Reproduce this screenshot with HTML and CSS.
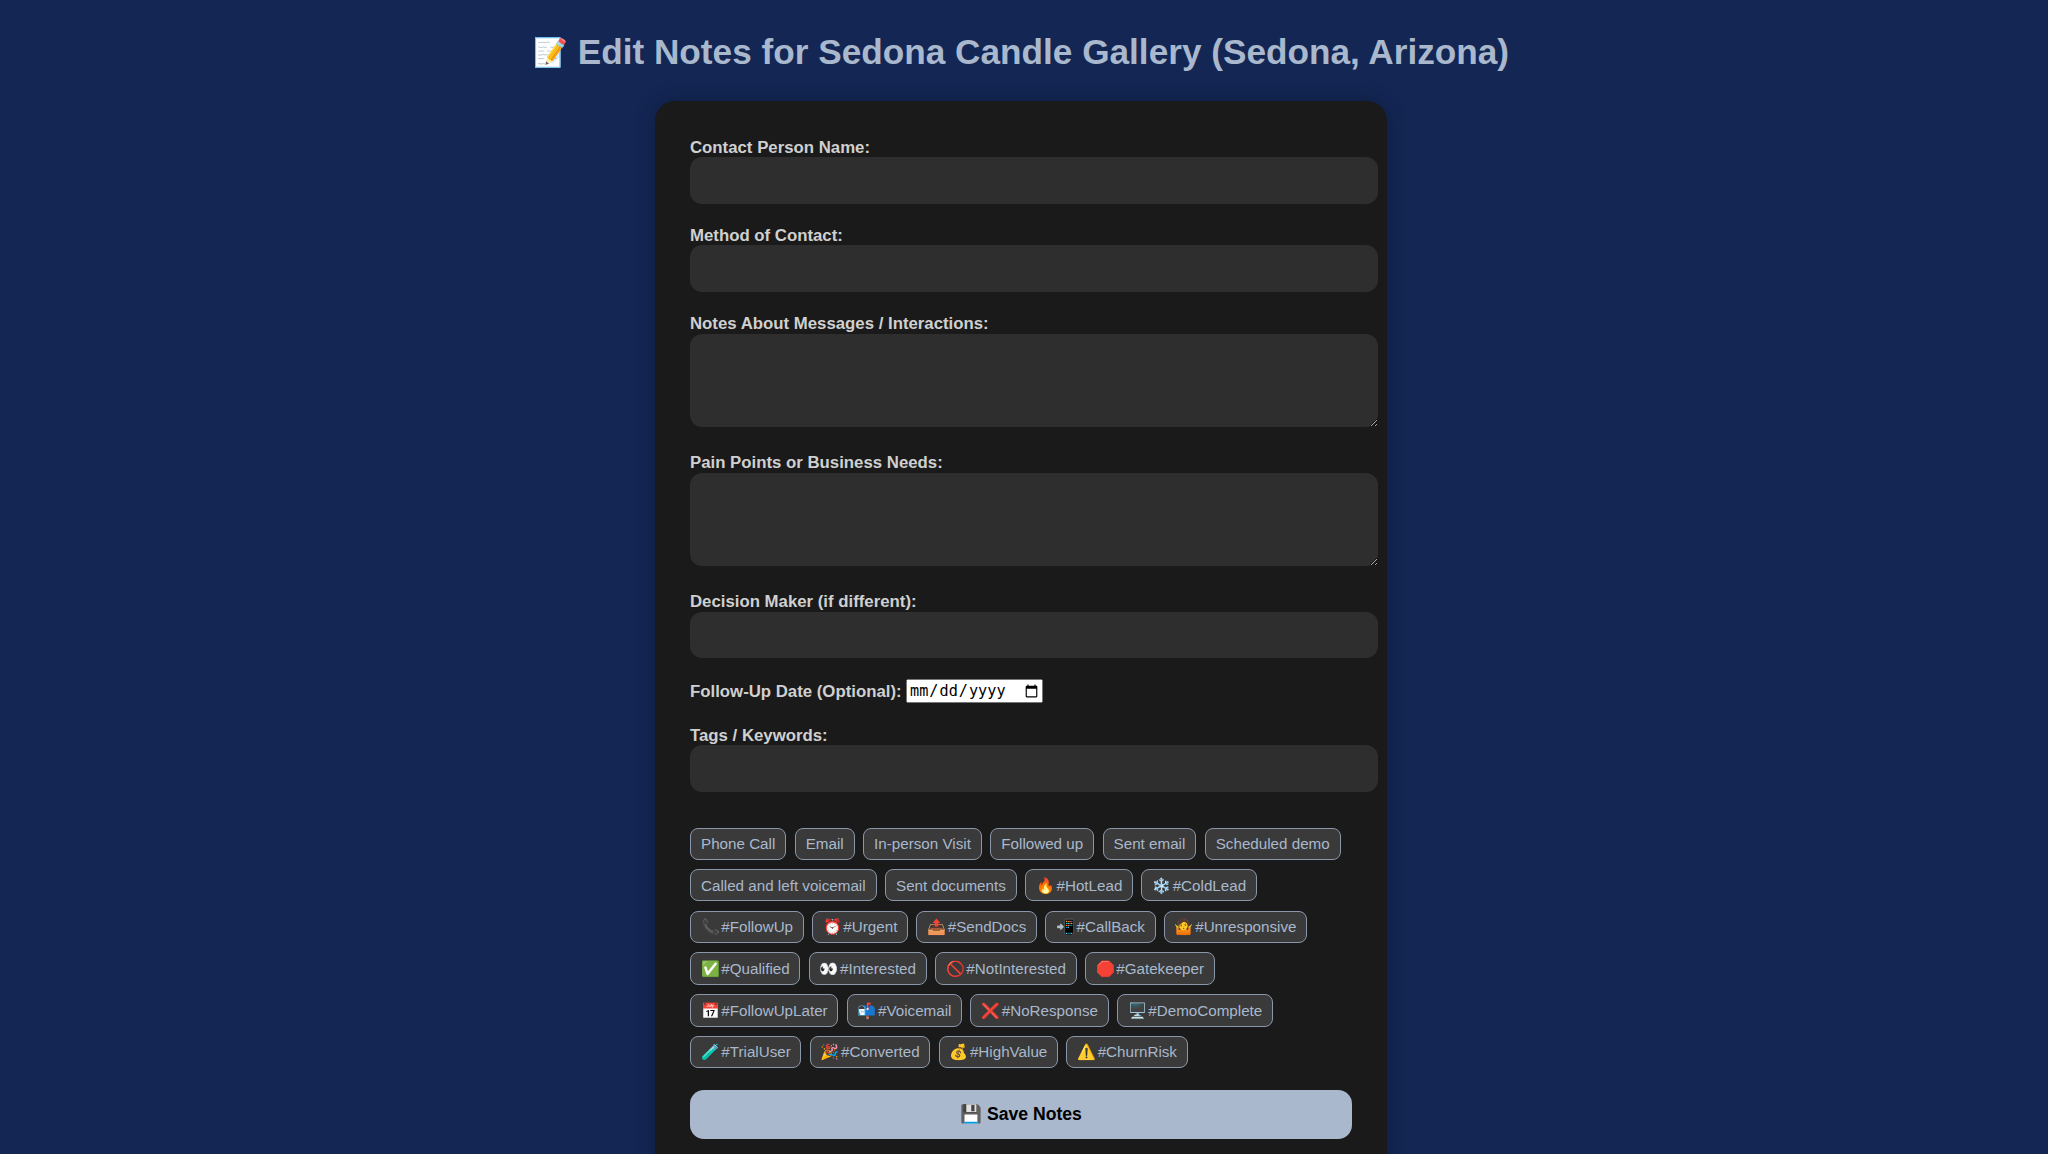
FILE: index.html
```html
<!DOCTYPE html>
<html lang="en">
<head>
<meta charset="utf-8">
<title>Edit Notes</title>
<link rel="stylesheet" href="styles.css">
</head>
<body>
<h1 class="title"><span class="title-emoji">📝</span> Edit Notes for Sedona Candle Gallery (Sedona, Arizona)</h1>
<form class="card">
  <label class="label">Contact Person Name:</label>
  <input class="field" type="text">
  <label class="label">Method of Contact:</label>
  <input class="field" type="text">
  <label class="label">Notes About Messages / Interactions:</label>
  <textarea class="field area"></textarea>
  <label class="label">Pain Points or Business Needs:</label>
  <textarea class="field area"></textarea>
  <label class="label">Decision Maker (if different):</label>
  <input class="field" type="text">
  <div class="date-row"><label class="label inline">Follow-Up Date (Optional):</label> <input class="date" type="date"></div>
  <label class="label">Tags / Keywords:</label>
  <input class="field" type="text">
  <div class="chips">
    <button type="button" class="chip">Phone Call</button>
    <button type="button" class="chip">Email</button>
    <button type="button" class="chip">In-person Visit</button>
    <button type="button" class="chip">Followed up</button>
    <button type="button" class="chip">Sent email</button>
    <button type="button" class="chip">Scheduled demo</button>
    <button type="button" class="chip">Called and left voicemail</button>
    <button type="button" class="chip">Sent documents</button>
    <button type="button" class="chip tag">🔥 #HotLead</button>
    <button type="button" class="chip tag">❄️ #ColdLead</button>
    <button type="button" class="chip tag">📞 #FollowUp</button>
    <button type="button" class="chip tag">⏰ #Urgent</button>
    <button type="button" class="chip tag">📤 #SendDocs</button>
    <button type="button" class="chip tag">📲 #CallBack</button>
    <button type="button" class="chip tag">🤷 #Unresponsive</button>
    <button type="button" class="chip tag">✅ #Qualified</button>
    <button type="button" class="chip tag">👀 #Interested</button>
    <button type="button" class="chip tag">🚫 #NotInterested</button>
    <button type="button" class="chip tag">🛑 #Gatekeeper</button>
    <button type="button" class="chip tag">📅 #FollowUpLater</button>
    <button type="button" class="chip tag">📬 #Voicemail</button>
    <button type="button" class="chip tag">❌ #NoResponse</button>
    <button type="button" class="chip tag">🖥️ #DemoComplete</button>
    <button type="button" class="chip tag">🧪 #TrialUser</button>
    <button type="button" class="chip tag">🎉 #Converted</button>
    <button type="button" class="chip tag">💰 #HighValue</button>
    <button type="button" class="chip tag">⚠️ #ChurnRisk</button>
  </div>
  <button type="button" class="save">💾 Save Notes</button>
</form>
</body>
</html>
```

FILE: styles.css
```css
* { box-sizing: border-box; }
html, body { margin: 0; height: 1154px; overflow: hidden; }
body {
  background: #132654;
  font-family: "Liberation Sans", Arial, sans-serif;
  padding: 0 6px 0 0;
}
.title {
  margin: 0;
  padding-top: 31px;
  height: 101px;
  text-align: center;
  color: #a9b8cc;
  font-size: 35.2px;
  line-height: 41px;
  font-weight: 700;
}
.title-emoji { font-size: 28px; vertical-align: 2px; }
.card {
  width: 732px;
  margin: 0 auto;
  padding: 35px 35px 40px;
  background: #1a1a1a;
  border-radius: 20px;
  box-shadow: 0 0 20px rgba(0,0,0,.25);
}
.label {
  display: block;
  color: #d0d0d0;
  font-size: 16.8px;
  line-height: 20px;
  font-weight: 700;
  margin-bottom: 1px;
  position: relative;
  top: 1.5px;
}
.label.inline { display: inline; }
.field {
  display: block;
  width: 688px;
  height: 46.6px;
  margin-bottom: 20.8px;
  padding: 12px;
  background: #2e2e2e;
  border: 0;
  border-radius: 12px;
  color: #fff;
}
.area { height: 93px; margin-bottom: 25px; }
.date-row { height: 45px; }
.date {
  font-size: 15.2px;
  height: 24px;
  width: 137px;
  vertical-align: middle;
}
.chips {
  display: flex;
  flex-wrap: wrap;
  gap: 9.3px 8.4px;
  margin-top: 36.6px;
  width: 662px;
}
.chip {
  font-family: "Liberation Sans", Arial, sans-serif;
  font-size: 15.2px;
  line-height: 17.4px;
  padding: 6px 10px;
  background: #3a3a3a;
  color: #a9b8cc;
  border: 1px solid #8a97a8;
  border-radius: 8px;
}
.tag {
  line-height: 18.4px;
  word-spacing: -2.5px;
  padding: 6.5px 9.6px 5.5px;
}
.save {
  display: block;
  width: 662px;
  height: 49px;
  margin-top: 22px;
  background: #a9b8cc;
  color: #000;
  border: 0;
  border-radius: 14px;
  font-family: "Liberation Sans", Arial, sans-serif;
  font-size: 17.6px;
  font-weight: 700;
}
```
